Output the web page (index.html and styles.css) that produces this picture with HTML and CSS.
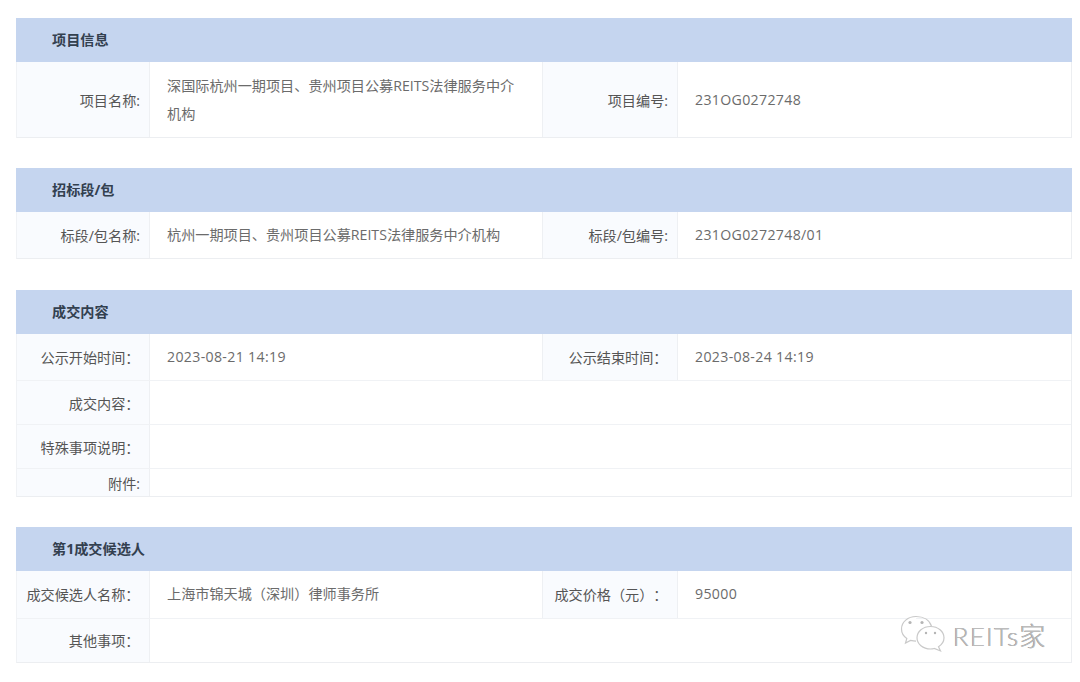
FILE: index.html
```html
<!DOCTYPE html>
<html lang="zh-CN">
<head>
<meta charset="utf-8">
<title>成交公告</title>
<link rel="stylesheet" href="styles.css">
</head>
<body>
<main class="page">
  <section class="panel panel-tight">
    <h2 class="panel-title">项目信息</h2>
    <div class="row row-75">
      <div class="label">项目名称:</div>
      <div class="value">深国际杭州一期项目、贵州项目公募REITS法律服务中介机构</div>
      <div class="label">项目编号:</div>
      <div class="value value-num">231OG0272748</div>
    </div>
  </section>
  <section class="panel">
    <h2 class="panel-title">招标段/包</h2>
    <div class="row row-46">
      <div class="label">标段/包名称:</div>
      <div class="value">杭州一期项目、贵州项目公募REITS法律服务中介机构</div>
      <div class="label">标段/包编号:</div>
      <div class="value value-num">231OG0272748/01</div>
    </div>
  </section>
  <section class="panel panel-tight">
    <h2 class="panel-title">成交内容</h2>
    <div class="row row-46">
      <div class="label label-full">公示开始时间：</div>
      <div class="value value-num">2023-08-21 14:19</div>
      <div class="label label-full">公示结束时间：</div>
      <div class="value value-num">2023-08-24 14:19</div>
    </div>
    <div class="row row-44">
      <div class="label label-full">成交内容：</div>
      <div class="value value-wide"></div>
    </div>
    <div class="row row-44">
      <div class="label label-full">特殊事项说明：</div>
      <div class="value value-wide"></div>
    </div>
    <div class="row row-28">
      <div class="label">附件:</div>
      <div class="value value-wide"></div>
    </div>
  </section>
  <section class="panel">
    <h2 class="panel-title">第1成交候选人</h2>
    <div class="row row-47">
      <div class="label label-full">成交候选人名称：</div>
      <div class="value">上海市锦天城（深圳）律师事务所</div>
      <div class="label label-full">成交价格（元）：</div>
      <div class="value value-num">95000</div>
    </div>
    <div class="row row-44 row-raised">
      <div class="label label-full">其他事项：</div>
      <div class="value value-wide"></div>
    </div>
  </section>
</main>
<div class="watermark">
  <svg class="wm-icon" width="46" height="38" viewBox="0 0 46 38" fill="none" stroke="#c9c9c9" stroke-width="1.2" aria-hidden="true">
    <path d="M16 1.500C8 1.500 1.500 7 1.500 14c0 4 2 7.200 5.300 9.500L5.500 28l5-2.600c1.800.5 3.500.8 5.500.8" fill="#fff"/>
    <path d="M16 1.500c7.500 0 13.500 3.700 15.500 9.700"/>
    <path d="M30.500 11.500c-7.500 0-13.500 5-13.500 11.300s6 11.200 13.500 11.200c1.300 0 2.600-.2 3.800-.5l6.200 2.500-2-4.300c3.500-2.100 5.500-5.300 5.500-8.900 0-6.300-6-11.300-13.500-11.300z" fill="#fff"/>
    <circle cx="10" cy="7.500" r="1.600" fill="#b5b5b5" stroke="none"/>
    <circle cx="22" cy="7.500" r="1.600" fill="#b5b5b5" stroke="none"/>
    <circle cx="26" cy="18" r="1.200" fill="#b5b5b5" stroke="none"/>
    <circle cx="35" cy="18" r="1.200" fill="#b5b5b5" stroke="none"/>
  </svg>
  <span class="wm-text">REITs家</span>
</div>
</body>
</html>
```
FILE: styles.css
```css
* { box-sizing: border-box; }
html, body { margin: 0; padding: 0; background: #fff; }
body {
  width: 1080px;
  height: 682px;
  overflow: hidden;
  position: relative;
  font-family: "Open Sans", "Noto Sans CJK SC", sans-serif;
  font-size: 14.15px;
  color: #666;
  text-spacing-trim: space-all;
}
.page {
  padding: 18px 8px 0 16px;
  display: flex;
  flex-direction: column;
}
.panel {
  margin-bottom: 31px;
  border-bottom: 1px solid #eceef1;
  border-left: 1px solid #f0f2f5;
  border-right: 1px solid #eceef1;
}
.panel-tight { margin-bottom: 30px; }
.panel-title {
  margin: 0 -1px;
  height: 44px;
  line-height: 43px;
  padding-left: 36px;
  background: #c5d5ef;
  font-size: 14.15px;
  font-weight: 700;
  color: #33404f;
}
.row {
  display: grid;
  grid-template-columns: 133px 393px 135px 1fr;
  border-top: 1px solid #f0f2f5;
}
.panel-title + .row { border-top: 0; }
.row-75 { height: 75px; }
.row-47 { height: 47px; }
.row-46 { height: 46px; }
.row-44 { height: 44px; }
.row-28 { height: 28px; }
.row-47 .label, .row-47 .value, .row-raised .label { padding-bottom: 1px; }
.label {
  display: flex;
  align-items: center;
  justify-content: flex-end;
  padding-right: 9px;
  background: #f9fbfe;
  border-right: 1px solid #eef0f3;
  color: #555;
  white-space: nowrap;
}
.label-full { padding-right: 9.500px; }
.value {
  display: flex;
  align-items: center;
  padding: 0 20px 0 17px;
  line-height: 28px;
  border-right: 1px solid #eef0f3;
  color: #6b6b6b;
}
.value:last-child { border-right: 0; }
.value-num { letter-spacing: .33px; }
.value-wide { grid-column: 2 / -1; }
.watermark {
  position: absolute;
  left: 900px;
  top: 615px;
  display: flex;
  align-items: center;
  gap: 7px;
}
.wm-text {
  font-family: "Lato", "Noto Sans CJK SC", sans-serif;
  font-size: 26px;
  font-weight: 300;
  color: #bcbcbc;
  text-shadow: -0.6px 0 0 #949494;
  letter-spacing: 1.200px;
}
```
